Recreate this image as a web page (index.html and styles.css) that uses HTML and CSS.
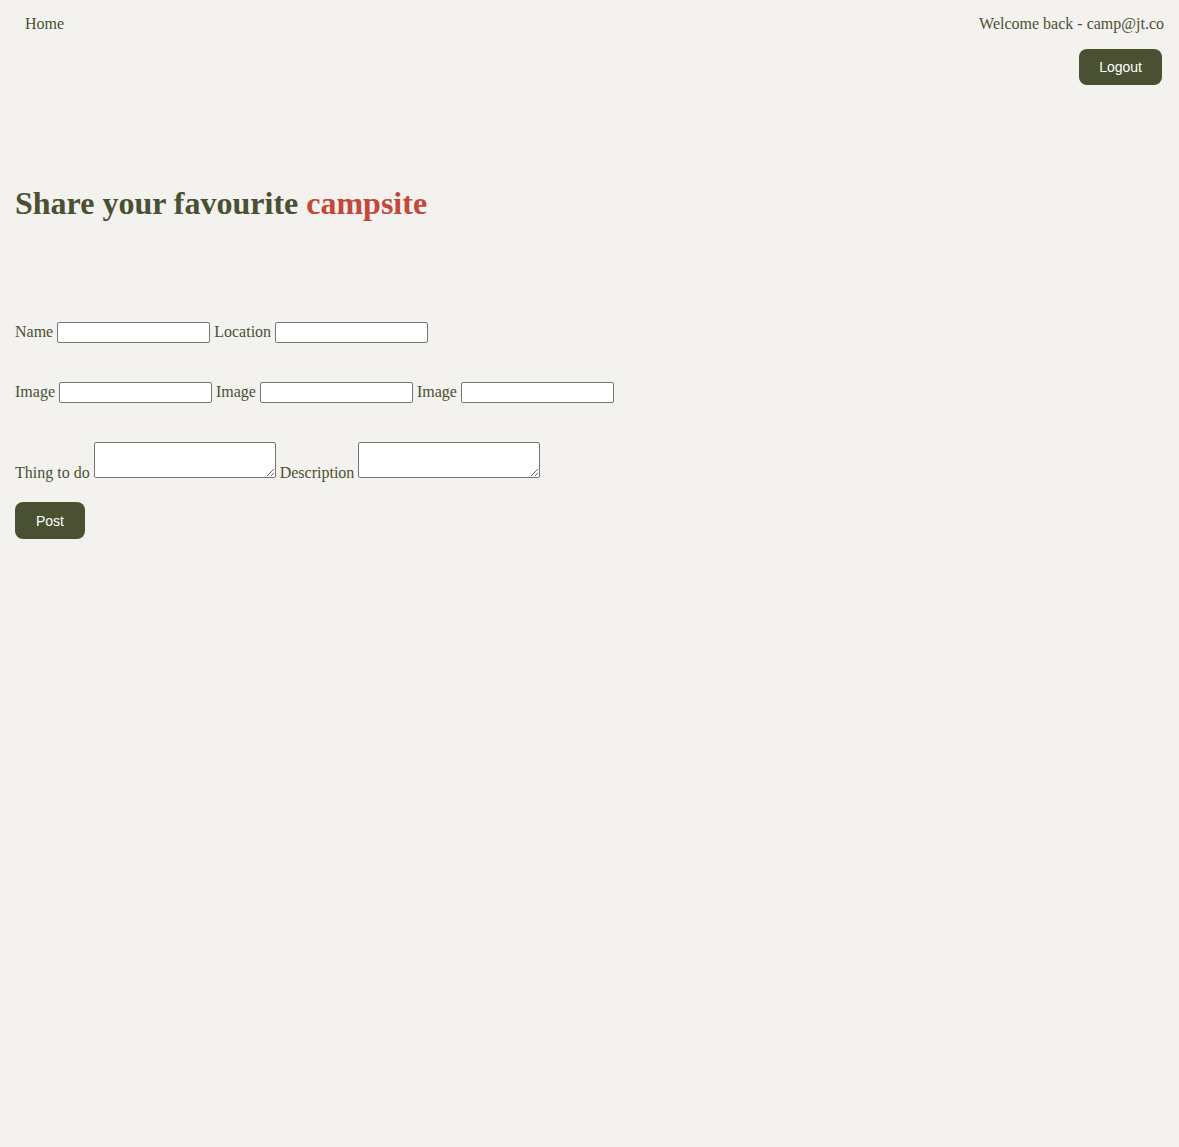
FILE: index.html
```html
<!DOCTYPE html>
<html lang="en">
<head>
<meta charset="utf-8">
<title>Share your favourite campsite</title>
<link rel="stylesheet" href="styles.css">
</head>
<body>
<header class="topbar">
  <nav class="nav"><a class="nav-link" href="#">Home</a></nav>
  <div class="account">
    <span class="welcome">Welcome back - camp@jt.co</span>
    <button class="btn btn-logout" type="button">Logout</button>
  </div>
</header>
<main class="main">
  <h1 class="title">Share your favourite <span class="accent">campsite</span></h1>
  <form class="form">
    <div class="row"><label>Name</label> <input type="text"> <label>Location</label> <input type="text"></div>
    <div class="row"><label>Image</label> <input type="text"> <label>Image</label> <input type="text"> <label>Image</label> <input type="text"></div>
    <div class="row row-area"><label>Thing to do</label> <textarea></textarea> <label>Description</label> <textarea></textarea></div>
    <div class="row-submit"><button class="btn btn-post" type="submit">Post</button></div>
  </form>
</main>
</body>
</html>
```
FILE: styles.css
```css
html, body {
  margin: 0;
  padding: 0;
  background: #f3f2ee;
}
body {
  font-family: "Liberation Serif", "Times New Roman", serif;
  font-size: 16px;
  color: #4a5032;
  min-height: 1147px;
}
.topbar {
  display: flex;
  justify-content: space-between;
  align-items: flex-start;
  padding: 15px 15px 0 25px;
}
.nav-link {
  color: #4a5032;
  text-decoration: none;
  line-height: 18px;
}
.account {
  display: flex;
  flex-direction: column;
  align-items: flex-end;
}
.welcome {
  line-height: 18px;
}
.btn {
  font-family: "Liberation Sans", Arial, sans-serif;
  font-size: 14px;
  line-height: 16px;
  color: #ffffff;
  background: #4a5032;
  border: none;
  border-radius: 8px;
  padding: 10px 20px;
  cursor: pointer;
}
.btn-logout {
  margin-top: 16px;
  margin-right: 2px;
}
.main {
  padding: 0 15px;
}
.title {
  font-size: 32px;
  font-weight: bold;
  line-height: 37px;
  margin: 100px 0 0 0;
}
.accent {
  color: #c4483a;
}
.form {
  display: flex;
  flex-direction: column;
  margin-top: 100px;
}
.row {
  line-height: 18px;
  margin-bottom: 39px;
}
.row-area {
  margin-bottom: 20px;
}
input {
  box-sizing: border-box;
  width: 153px;
  height: 21px;
  border: 1px solid #767676;
  border-radius: 2px;
  background: #ffffff;
  font: 13.33px "Liberation Sans", Arial, sans-serif;
  padding: 1px 2px;
}
textarea {
  box-sizing: border-box;
  width: 182px;
  height: 36px;
  border: 1px solid #767676;
  border-radius: 2px;
  background: #ffffff;
  font: 13.33px "Liberation Mono", monospace;
  padding: 2px;
  vertical-align: baseline;
}
.btn-post {
  padding: 11px 21px 10px;
}
```
